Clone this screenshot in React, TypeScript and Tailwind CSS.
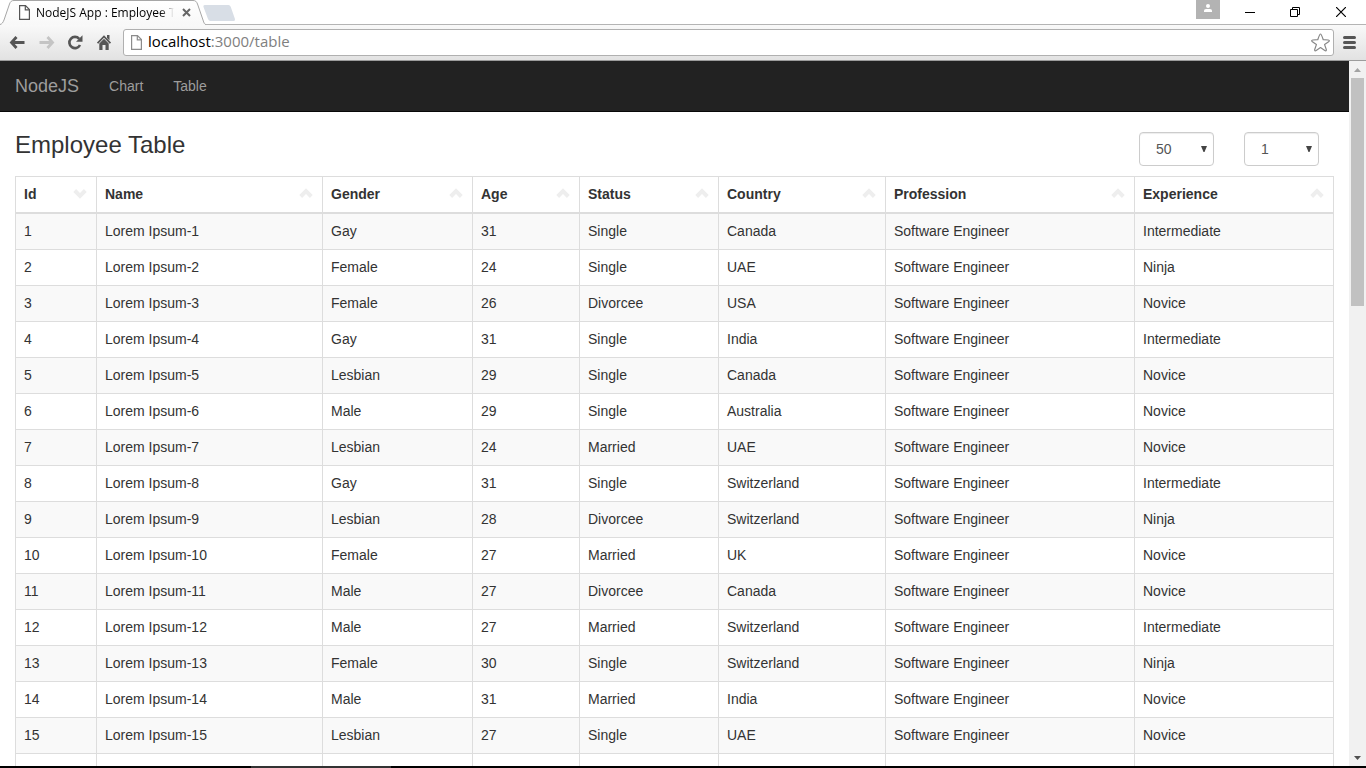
import { useState } from "react";

const columns = [
  { label: "Id", width: "w-[81px]" },
  { label: "Name", width: "w-[226px]" },
  { label: "Gender", width: "w-[150px]" },
  { label: "Age", width: "w-[107px]" },
  { label: "Status", width: "w-[139px]" },
  { label: "Country", width: "w-[167px]" },
  { label: "Profession", width: "w-[249px]" },
  { label: "Experience", width: "w-[199px]" },
];

const employees: [string, number, string, string, string][] = [
  ["Gay", 31, "Single", "Canada", "Intermediate"],
  ["Female", 24, "Single", "UAE", "Ninja"],
  ["Female", 26, "Divorcee", "USA", "Novice"],
  ["Gay", 31, "Single", "India", "Intermediate"],
  ["Lesbian", 29, "Single", "Canada", "Novice"],
  ["Male", 29, "Single", "Australia", "Novice"],
  ["Lesbian", 24, "Married", "UAE", "Novice"],
  ["Gay", 31, "Single", "Switzerland", "Intermediate"],
  ["Lesbian", 28, "Divorcee", "Switzerland", "Ninja"],
  ["Female", 27, "Married", "UK", "Novice"],
  ["Male", 27, "Divorcee", "Canada", "Novice"],
  ["Male", 27, "Married", "Switzerland", "Intermediate"],
  ["Female", 30, "Single", "Switzerland", "Ninja"],
  ["Male", 31, "Married", "India", "Novice"],
  ["Lesbian", 27, "Single", "UAE", "Novice"],
];

function PageIcon({ className }: { className: string }) {
  return (
    <svg viewBox="0 0 11 15" className={className} aria-hidden="true">
      <path d="M.6 .6h5.900l3.900 4v9.800H.6z" fill="#fff" stroke="currentColor" strokeWidth="1.2" />
      <path d="M6.300 .6v4.200h4.200" fill="none" stroke="currentColor" strokeWidth="1.2" />
    </svg>
  );
}

function TabStrip() {
  return (
    <header className="flex h-6 shrink-0 items-start justify-between bg-white">
      <div className="flex items-start">
        <div className="relative flex h-[25px] w-[206px] items-center pl-[19px]">
          <svg viewBox="0 0 206 25" className="absolute inset-0 h-[25px] w-[206px]" aria-hidden="true">
            <defs>
              <linearGradient id="tab" x1="0" y1="0" x2="0" y2="1">
                <stop offset="0" stopColor="#ffffff" />
                <stop offset="1" stopColor="#f8f8f8" />
              </linearGradient>
            </defs>
            <path
              d="M0 24.5C2 24 3 22.500 4 20L9.500 4C10.500 1.500 11.500.5 14 .5H193C195.500 .5 196.500 1.500 197.500 4L203 20C204 23 204.500 24.500 206 24.500V25H0Z"
              fill="url(#tab)"
            />
            <path
              d="M0 24.5C2 24 3 22.500 4 20L9.500 4C10.500 1.500 11.500.5 14 .5H193C195.500 .5 196.500 1.500 197.500 4L203 20C204 23 204.500 24.500 206 24.500"
              fill="none"
              stroke="#a6a6a6"
            />
          </svg>
          <PageIcon className="relative mr-[6px] h-[15px] w-[11px] text-[#555]" />
          <span className="relative w-[138px] overflow-hidden bg-linear-to-r from-black from-90% to-transparent bg-clip-text font-['Open_Sans',sans-serif] text-[12px] leading-4 whitespace-nowrap text-transparent">
            NodeJS App : Employee Table
          </span>
          <button type="button" aria-label="Close tab" className="relative ml-2 flex">
            <svg viewBox="0 0 9 9" className="size-[9px]" aria-hidden="true">
              <path d="M1 1l7 7M8 1l-7 7" stroke="#666" strokeWidth="2" />
            </svg>
          </button>
        </div>
        <button type="button" aria-label="New tab" className="mt-[5px] -ml-[3px]">
          <svg viewBox="0 0 32 16" className="h-4 w-8" aria-hidden="true">
            <path
              d="M2 0H25.500Q27 0 27.700 1.800L31.800 13.500Q32.500 16 30.500 16H7.500Q5.700 16 5 14L.5 2Q0 0 2 0Z"
              fill="#d8dee6"
            />
          </svg>
        </button>
      </div>
      <div className="flex items-start">
        <button type="button" aria-label="Profile" className="flex h-[19px] w-6 justify-center bg-[#b3b3b3] pt-1">
          <svg viewBox="0 0 8 8" className="size-2" aria-hidden="true">
            <circle cx="4" cy="2" r="2" fill="#fff" />
            <path d="M0 8V6.500Q0 5 2 5H6Q8 5 8 6.500V8Z" fill="#fff" />
          </svg>
        </button>
        <button type="button" aria-label="Minimize" className="ml-[7px] flex h-6 w-[46px] items-center justify-center">
          <svg viewBox="0 0 10 10" className="size-[10px]" aria-hidden="true">
            <path d="M0 5.500H10" stroke="#000" />
          </svg>
        </button>
        <button type="button" aria-label="Restore" className="flex h-6 w-11 items-center justify-center">
          <svg viewBox="0 0 10 10" className="size-[10px]" aria-hidden="true">
            <path d="M.5 2.500H7.500V9.500H.5ZM2.500 2.500V.5H9.500V7.500H7.500" fill="none" stroke="#000" />
          </svg>
        </button>
        <button type="button" aria-label="Close" className="mr-[2px] flex h-6 w-[47px] items-center justify-center">
          <svg viewBox="0 0 10 10" className="size-[10px]" aria-hidden="true">
            <path d="M0 0L10 10M10 0L0 10" stroke="#000" strokeWidth="1.2" />
          </svg>
        </button>
      </div>
    </header>
  );
}

function Toolbar() {
  return (
    <div className="flex h-[37px] shrink-0 items-center border-t border-b border-t-[#b4b4b4] border-b-[#9c9c9c] bg-linear-to-b from-[#f9f9f9] to-[#e2e2e2] pl-[9px]">
      <button type="button" aria-label="Back" className="mr-[14px]">
        <svg viewBox="0 0 16 15" className="h-[15px] w-4" aria-hidden="true">
          <path d="M7.500 2L2.500 7.500L7.500 13M2.500 7.500H15.500" fill="none" stroke="#555" strokeWidth="2.800" />
        </svg>
      </button>
      <button type="button" aria-label="Forward" className="mr-3">
        <svg viewBox="0 0 16 15" className="h-[15px] w-4" aria-hidden="true">
          <path d="M8.500 2L13.500 7.500L8.500 13M13.500 7.500H.5" fill="none" stroke="#c4c4c4" strokeWidth="2.800" />
        </svg>
      </button>
      <button type="button" aria-label="Reload" className="mr-[14px]">
        <svg viewBox="0 0 16 15" className="h-[15px] w-4" aria-hidden="true">
          <path d="M12.200 3.800A5.600 5.600 0 1 0 13 10" fill="none" stroke="#555" strokeWidth="2.600" />
          <path d="M15.500 .3V6.800H9Z" fill="#555" />
        </svg>
      </button>
      <button type="button" aria-label="Home" className="mr-3">
        <svg viewBox="0 0 14 15" className="h-[15px] w-[14px]" aria-hidden="true">
          <path d="M.6 8.200L7 1.500L13.400 8.200" fill="none" stroke="#555" strokeWidth="1.800" />
          <path d="M10 0H12.500V5.500L10 3Z" fill="#555" />
          <path d="M2.300 8.500L7 3.800L11.700 8.500V15H8.500V10H5.500V15H2.300Z" fill="#555" />
        </svg>
      </button>
      <form className="flex h-[27px] grow items-center rounded-[3px] border border-[#b0b0b0] bg-white pl-[7px]">
        <PageIcon className="mr-[6px] h-[15px] w-[11px] text-[#8c8c8c]" />
        <label className="relative flex h-[25px] grow items-start font-['Open_Sans',sans-serif] text-[15px] leading-[23px]">
          <span aria-hidden="true" className="pointer-events-none text-[#808080]">
            <span className="text-black">localhost</span>:3000/table
          </span>
          <input
            aria-label="Address"
            className="absolute inset-0 w-full bg-transparent text-transparent caret-black outline-none"
          />
        </label>
        <button type="button" aria-label="Bookmark" className="mr-[3px]">
          <svg viewBox="0 0 19 19" className="size-[19px]" aria-hidden="true">
            <path
              d="M9.500 1C10.300 1 10.600 2 12.200 6.700L17.300 7C18.600 7.200 18.600 8 17.600 8.700L13.600 11.600L15.300 16.500C15.500 17.800 14.800 18.200 13.800 17.500L9.500 14.600L5.200 17.500C4.200 18.200 3.500 17.800 3.700 16.500L5.400 11.600L1.400 8.700C.4 8 .4 7.200 1.700 7L6.800 6.700C8.400 2 8.700 1 9.500 1Z"
              fill="#fff"
              stroke="#888"
              strokeWidth="1.200"
              strokeLinejoin="round"
            />
          </svg>
        </button>
      </form>
      <button type="button" aria-label="Menu" className="mr-[10px] ml-[9px]">
        <svg viewBox="0 0 13 13" className="size-[13px]" aria-hidden="true">
          <path d="M1.500 1.500H11.500M1.500 6.500H11.500M1.500 11.500H11.500" stroke="#555" strokeWidth="3" strokeLinecap="round" />
        </svg>
      </button>
    </div>
  );
}

function Picker({ label, options }: { label: string; options: string[] }) {
  return (
    <div className="relative w-[75px]">
      <select
        aria-label={label}
        className="block h-[34px] w-full appearance-none rounded-[4px] border border-[#ccc] bg-white pl-4 text-[14px] leading-5 text-[#555] shadow-[inset_0_1px_1px_rgba(0,0,0,0.075)]"
      >
        {options.map((option) => (
          <option key={option}>{option}</option>
        ))}
      </select>
      <svg
        viewBox="0 0 6 6"
        className="pointer-events-none absolute top-[14px] right-[7px] size-[6px]"
        aria-hidden="true"
      >
        <path d="M0 0H6L3.500 6H2.500Z" fill="#444" />
      </svg>
    </div>
  );
}

function EmployeeTable() {
  const [sorted, setSorted] = useState("Id");
  return (
    <table className="w-full table-fixed border-collapse border border-[#ddd] text-[14px] leading-[19px]">
      <thead>
        <tr>
          {columns.map(({ label, width }) => (
            <th key={label} scope="col" className={`${width} border border-b-2 border-[#ddd] p-2 text-left font-bold`}>
              <button
                type="button"
                onClick={() => setSorted(label)}
                className="flex w-full items-center justify-between"
              >
                {label}
                <svg viewBox="0 0 14 14" className="mr-px mb-1 h-[14px] w-[14px]" aria-hidden="true">
                  <path
                    d={sorted === label ? "M1.700 4.500L7 9.800L12.300 4.500" : "M1.700 10.500L7 5.200L12.300 10.500"}
                    fill="none"
                    stroke="#eee"
                    strokeWidth="4"
                  />
                </svg>
              </button>
            </th>
          ))}
        </tr>
      </thead>
      <tbody>
        {employees.map(([gender, age, status, country, experience], index) => (
          <tr key={index} className="odd:bg-[#f9f9f9]">
            {[index + 1, `Lorem Ipsum-${index + 1}`, gender, age, status, country, "Software Engineer", experience].map(
              (value, cell) => (
                <td key={cell} className="border border-[#ddd] p-2">
                  {value}
                </td>
              ),
            )}
          </tr>
        ))}
        <tr className="h-9">
          {columns.map(({ label }) => (
            <td key={label} className="border border-[#ddd]" />
          ))}
        </tr>
      </tbody>
    </table>
  );
}

function ScrollBar() {
  return (
    <div className="flex w-[17px] shrink-0 flex-col items-center bg-[#f1f1f1]" aria-hidden="true">
      <div className="flex h-[17px] items-center">
        <svg viewBox="0 0 7 4" className="h-1 w-[7px]">
          <path d="M3.500 0L7 4H0Z" fill="#a3a3a3" />
        </svg>
      </div>
      <div className="h-[228px] w-[13px] bg-[#c1c1c1]" />
      <div className="mt-auto flex h-[17px] items-center">
        <svg viewBox="0 0 7 4" className="h-1 w-[7px]">
          <path d="M0 0H7L3.500 4Z" fill="#505050" />
        </svg>
      </div>
    </div>
  );
}

export default function App() {
  return (
    <div className="flex h-screen flex-col overflow-hidden bg-white font-['Liberation_Sans',Arial,sans-serif] text-[#333]">
      <TabStrip />
      <Toolbar />
      <div className="flex min-h-0 grow">
        <div className="min-w-0 grow overflow-hidden">
          <nav className="flex h-[51px] items-center gap-[30px] border-b border-[#080808] bg-[#222] px-[15px] text-[14px] leading-5 text-[#9d9d9d]">
            <a href="#home" className="text-[18px]">
              NodeJS
            </a>
            <a href="#chart">Chart</a>
            <a href="#table">Table</a>
          </nav>
          <main className="px-[15px] pt-5">
            <div className="mb-[10px] flex justify-between pr-[15px]">
              <h1 className="text-[24px] leading-[26px]">Employee Table</h1>
              <div className="flex gap-[30px]">
                <Picker label="Rows per page" options={["50", "100"]} />
                <Picker label="Page" options={["1", "2"]} />
              </div>
            </div>
            <EmployeeTable />
          </main>
        </div>
        <ScrollBar />
      </div>
      <footer className="flex h-[2px] shrink-0 bg-black pl-[251px]">
        <div className="w-[140px] bg-[#333]" />
      </footer>
    </div>
  );
}
